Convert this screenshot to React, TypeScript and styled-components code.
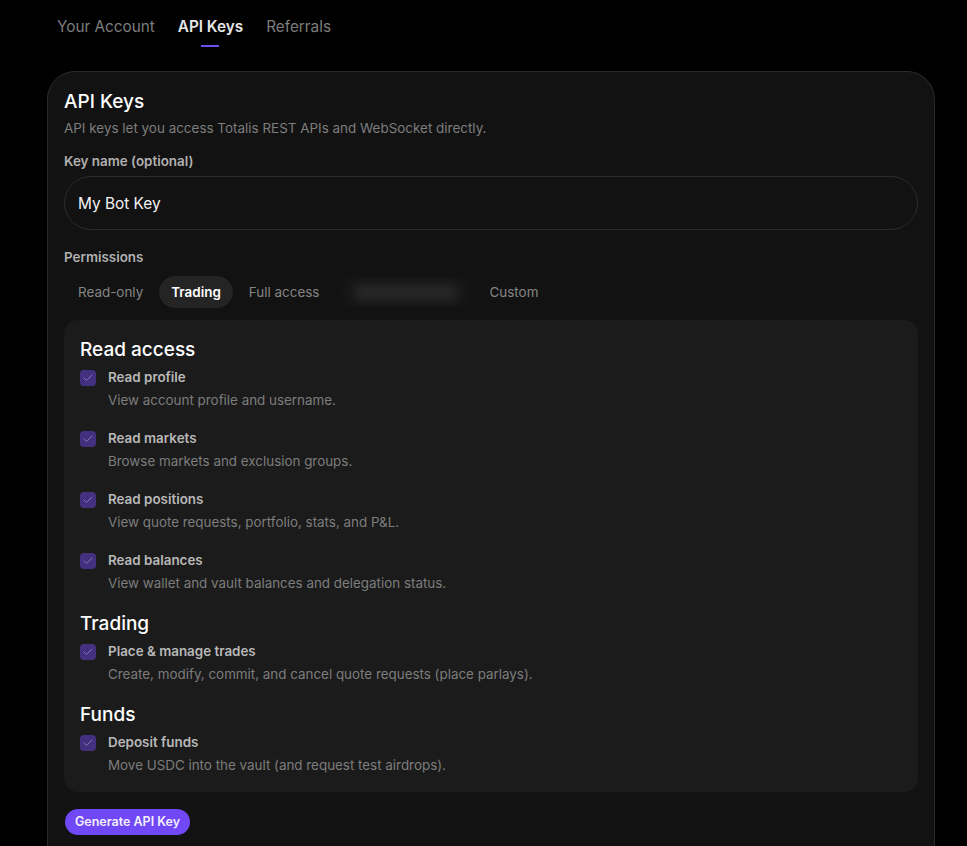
import React from "react";
import styled, { createGlobalStyle } from "styled-components";

const Global = createGlobalStyle`
  html, body { margin: 0; padding: 0; background: #000; height: 846px; overflow: hidden; }
  body { font-family: Inter, "Liberation Sans", sans-serif; }
  * { box-sizing: border-box; }
`;

const Page = styled.div`
  padding: 0 32px 0 47px;
  width: 967px;
  height: 846px;
  overflow: hidden;
`;

const Tabs = styled.nav`
  display: flex;
  gap: 23px;
  padding-left: 10px;
  height: 71px;
`;

const Tab = styled.div<{ $active?: boolean }>`
  position: relative;
  padding-top: 17px;
  font-size: 15.3px;
  line-height: 20px;
  font-weight: ${(p) => (p.$active ? 600 : 400)};
  color: ${(p) => (p.$active ? "#e6e6e6" : "#7d7d7d")};
  ${(p) =>
    p.$active &&
    `&::after {
      content: "";
      position: absolute;
      left: 50%;
      top: 45px;
      width: 18px;
      height: 2px;
      margin-left: -9px;
      background: #6f4ff0;
    }`}
`;

const Card = styled.section`
  width: 888px;
  height: 900px;
  background: #121212;
  border: 1px solid #2a2a2a;
  border-radius: 28px;
  padding: 15px 16px;
`;

const Title = styled.h1`
  margin: 0;
  padding-top: 1px;
  font-size: 19px;
  line-height: 27px;
  font-weight: 500;
  color: #fff;
`;

const Subtitle = styled.p`
  margin: 3px 0 0;
  font-size: 13.45px;
  line-height: 20px;
  color: #7d7d7d;
`;

const Label = styled.div`
  font-size: 13.4px;
  line-height: 18px;
  font-weight: 600;
  color: #b0b0b0;
`;

const KeyLabel = styled(Label)`
  margin-top: 14px;
`;

const KeyInput = styled.div`
  margin-top: 6px;
  height: 54px;
  border: 1px solid #2c2c2c;
  border-radius: 27px;
  padding: 0 13px;
  display: flex;
  align-items: center;
  font-size: 15.4px;
  font-weight: 400;
  color: #f2f2f2;
`;

const PermLabel = styled(Label)`
  margin-top: 18px;
`;

const Pills = styled.div`
  display: flex;
  align-items: center;
  gap: 3px;
  margin-top: 10px;
  padding-left: 1px;
`;

const Pill = styled.div<{ $active?: boolean }>`
  height: 32px;
  padding: 0 ${(p) => (p.$active ? 12 : 13)}px;
  border-radius: 16px;
  display: flex;
  align-items: center;
  font-size: 13.45px;
  font-weight: ${(p) => (p.$active ? 600 : 400)};
  color: ${(p) => (p.$active ? "#fff" : "#858585")};
  background: ${(p) => (p.$active ? "#242424" : "transparent")};
`;

const BlurSlot = styled.div`
  width: 127px;
  height: 30px;
  margin: 0 4px 0 7px;
  background: #141414;
  display: flex;
  align-items: center;
  justify-content: center;
  overflow: hidden;
`;

const BlurText = styled.div`
  width: 104px;
  height: 15px;
  background: #2a2a2a;
  filter: blur(6px);
`;

const Panel = styled.div`
  margin-top: 12px;
  height: 472px;
  background: #1b1b1b;
  border-radius: 14px;
  padding: 15px 16px;
`;

const Section = styled.div<{ $gap?: number }>`
  margin-top: ${(p) => p.$gap ?? 0}px;
`;

const SectionTitle = styled.h2`
  margin: 0;
  padding-top: 1px;
  font-size: 19px;
  line-height: 27px;
  font-weight: 500;
  color: #fff;
`;

const Perm = styled.div`
  display: flex;
  gap: 12px;
  margin-top: 5px;
  height: 55px;

  & + & {
    margin-top: 6px;
  }
`;

const Check = styled.div`
  width: 16px;
  height: 16px;
  margin-top: 2px;
  border-radius: 4px;
  background: #43307f;
  display: flex;
  align-items: center;
  justify-content: center;
`;

const PermText = styled.div`
  display: flex;
  flex-direction: column;
`;

const PermName = styled.div`
  font-size: 13.4px;
  line-height: 18px;
  font-weight: 600;
  color: #b8b8b8;
`;

const PermDesc = styled.div`
  margin-top: 5px;
  font-size: 13.4px;
  line-height: 18px;
  color: #7d7d7d;
`;

const Generate = styled.button`
  display: block;
  margin: 17px 0 0 1px;
  height: 26px;
  width: 125px;
  padding: 0 0 1px;
  border: 0;
  border-radius: 13px;
  background: #7148f5;
  color: #f4f0ff;
  font-family: inherit;
  font-size: 12.5px;
  font-weight: 600;
`;

const CheckIcon = () => (
  <svg width="12" height="12" viewBox="0 0 24 24" fill="none" stroke="#8874bb" strokeWidth="2" strokeLinecap="round" strokeLinejoin="round">
    <path d="M20 6 9 17l-5-5" />
  </svg>
);

const groups = [
  {
    title: "Read access",
    gap: 0,
    items: [
      ["Read profile", "View account profile and username."],
      ["Read markets", "Browse markets and exclusion groups."],
      ["Read positions", "View quote requests, portfolio, stats, and P&L."],
      ["Read balances", "View wallet and vault balances and delegation status."],
    ],
  },
  {
    title: "Trading",
    gap: 3,
    items: [["Place & manage trades", "Create, modify, commit, and cancel quote requests (place parlays)."]],
  },
  {
    title: "Funds",
    gap: 3,
    items: [["Deposit funds", "Move USDC into the vault (and request test airdrops)."]],
  },
];

export default function App() {
  return (
    <Page>
      <Global />
      <Tabs>
        <Tab>Your Account</Tab>
        <Tab $active>API Keys</Tab>
        <Tab>Referrals</Tab>
      </Tabs>
      <Card>
        <Title>API Keys</Title>
        <Subtitle>API keys let you access Totalis REST APIs and WebSocket directly.</Subtitle>
        <KeyLabel>Key name (optional)</KeyLabel>
        <KeyInput>My Bot Key</KeyInput>
        <PermLabel>Permissions</PermLabel>
        <Pills>
          <Pill>Read-only</Pill>
          <Pill $active>Trading</Pill>
          <Pill>Full access</Pill>
          <BlurSlot>
            <BlurText />
          </BlurSlot>
          <Pill>Custom</Pill>
        </Pills>
        <Panel>
          {groups.map((g) => (
            <Section key={g.title} $gap={g.gap}>
              <SectionTitle>{g.title}</SectionTitle>
              {g.items.map(([name, desc]) => (
                <Perm key={name}>
                  <Check>
                    <CheckIcon />
                  </Check>
                  <PermText>
                    <PermName>{name}</PermName>
                    <PermDesc>{desc}</PermDesc>
                  </PermText>
                </Perm>
              ))}
            </Section>
          ))}
        </Panel>
        <Generate>Generate API Key</Generate>
      </Card>
    </Page>
  );
}
